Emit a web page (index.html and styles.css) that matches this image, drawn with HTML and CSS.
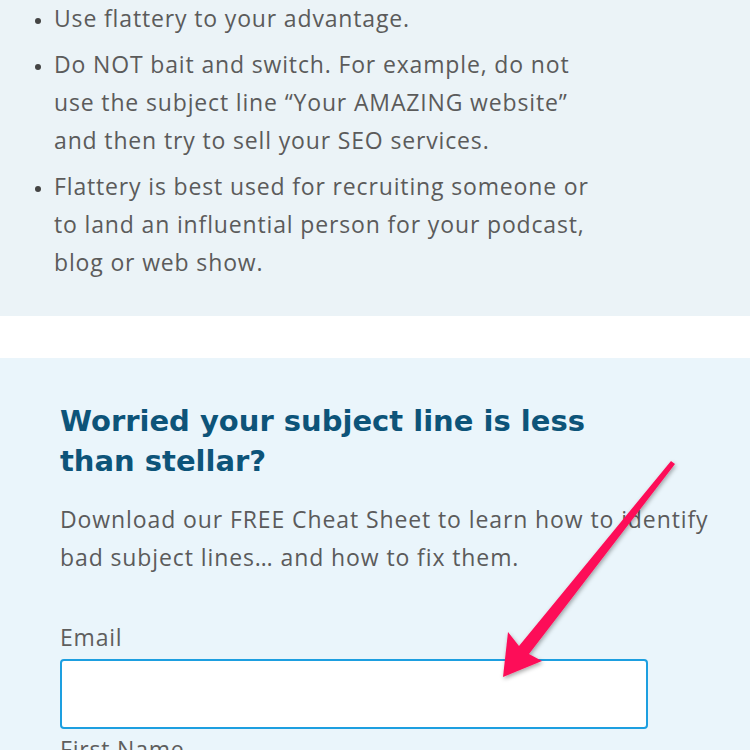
FILE: index.html
```html
<!DOCTYPE html>
<html>
<head>
<meta charset="utf-8">
<link rel="stylesheet" href="styles.css">
</head>
<body>
<section class="tips">
  <ul class="tip-list">
    <li>Use flattery to your advantage.</li>
    <li>Do NOT bait and switch. For example, do not use the subject line “Your AMAZING website” and then try to sell your SEO services.</li>
    <li>Flattery is best used for recruiting someone or to land an influential person for your podcast, blog or web show.</li>
  </ul>
</section>
<section class="optin">
  <h2 class="optin-title">Worried your subject line is less than stellar?</h2>
  <p class="optin-text">Download our FREE Cheat Sheet to learn how to identify bad subject lines… and how to fix them.</p>
  <form class="optin-form">
    <label class="field-label" for="email">Email</label>
    <input class="field-input" id="email" type="text">
    <label class="field-label" for="fname">First Name</label>
    <input class="field-input" id="fname" type="text">
  </form>
</section>
<svg class="arrow" width="750" height="750" viewBox="0 0 750 750">
  <defs>
    <filter id="sh" x="-20%" y="-20%" width="140%" height="140%">
      <feDropShadow dx="1" dy="2" stdDeviation="2" flood-color="#000" flood-opacity="0.35"/>
    </filter>
  </defs>
  <polygon filter="url(#sh)" fill="#fd1159" points="671,461 675,464 529,654 542,661 503,677 508,632 519,646"/>
</svg>
</body>
</html>
```
FILE: styles.css
```css
html, body {
  margin: 0;
  padding: 0;
  background: #ffffff;
}
body {
  width: 750px;
  height: 750px;
  overflow: hidden;
  position: relative;
  font-family: "Open Sans", "Lato", sans-serif;
  color: #5b5b5b;
}
.tips {
  background: #ebf3f7;
  height: 317px;
  box-sizing: border-box;
}
.tip-list {
  margin: -1px 0 0 0;
  padding: 0 150px 0 54px;
  font-size: 23px;
  letter-spacing: 0.85px;
  line-height: 38px;
}
.tip-list li {
  margin-bottom: 8px;
}
.tip-list li::marker {
  color: #444;
  font-size: 18px;
}
.optin {
  margin-top: 42px;
  background: #eaf5fb;
  padding: 43px 30px 0 60px;
  height: 400px;
}
.optin-title {
  margin: 0;
  font-family: "DejaVu Sans", "Open Sans", sans-serif;
  font-weight: 700;
  font-size: 29px;
  line-height: 40px;
  color: #0d5479;
  width: 560px;
}
.optin-text {
  margin: 19px 0 0 0;
  font-size: 23px;
  letter-spacing: 0.9px;
  line-height: 38px;
  color: #5b5b5b;
}
.optin-form {
  display: flex;
  flex-direction: column;
  margin-top: 46px;
}
.field-label {
  font-size: 23px;
  letter-spacing: 0.8px;
  line-height: 30px;
  color: #5e5e5e;
}
.field-input {
  box-sizing: border-box;
  width: 588px;
  height: 70px;
  margin: 7px 0 5px 0;
  border: 2px solid #1d9fe0;
  border-radius: 4px;
  background: #fff;
  outline: none;
}
.arrow {
  position: absolute;
  left: 0;
  top: 0;
  pointer-events: none;
}
```
